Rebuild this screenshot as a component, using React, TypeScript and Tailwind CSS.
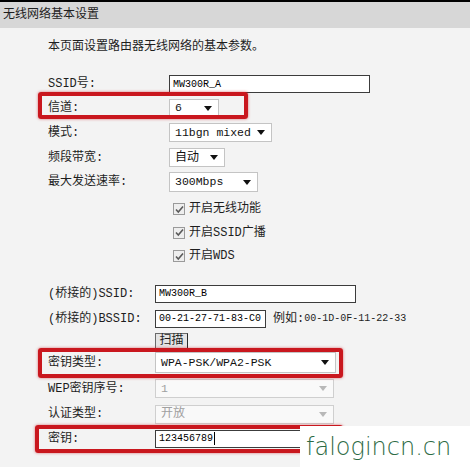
import React from "react";

const Arrow = ({ muted }: { muted?: boolean }) => (
  <svg width="8" height="5" viewBox="0 0 8 5" className="shrink-0">
    <path d="M0 0h8L4 5z" fill={muted ? "#b8b8b8" : "#111"} />
  </svg>
);

const Select = ({
  width,
  value,
  disabled,
  height = 19,
  mono = true,
}: {
  width: number;
  value: string;
  disabled?: boolean;
  height?: number;
  mono?: boolean;
}) => (
  <div
    className={`flex items-center justify-between pl-[5px] pr-[6px] border ${
      disabled ? "bg-[#f9f9f9] border-[#cfcfcf] text-[#a0a0a0]" : "bg-white border-[#c4c4c4] text-[#111]"
    }`}
    style={{ width, height }}
  >
    <span className={mono ? "text-[11.5px]" : "text-[12px]"}>{value}</span>
    <Arrow muted={disabled} />
  </div>
);

const TextInput = ({ width, value, cursor }: { width: number; value: string; cursor?: boolean }) => (
  <div
    className="flex items-center bg-white border border-[#3c3c3c] pl-[3px] text-[10px] text-black"
    style={{ width, height: 18 }}
  >
    {value}
    {cursor && <span className="inline-block w-px h-[13px] bg-black ml-px" />}
  </div>
);

const Check = ({ label }: { label: string }) => (
  <div className="flex items-center">
    <span className="w-[169px]" />
    <span className="ml-[4px] w-[12px] h-[12px] border border-[#9a9a9a] bg-[#eeeeee] flex items-center justify-center">
      <svg width="9" height="9" viewBox="0 0 9 9">
        <path d="M1 4.5l2.3 2.5L8 1.5" stroke="#5a5a5a" strokeWidth="1.6" fill="none" />
      </svg>
    </span>
    <span className="ml-[4px]">{label}</span>
  </div>
);

export default function App() {
  return (
    <div className="relative w-[470px] h-[467px] overflow-hidden bg-[#f3f3f3] text-[12px] text-[#1e1e1e] font-['Liberation_Mono','Noto_Sans_CJK_SC',monospace]">
      <div className="border-t-2 border-black" />
      <div className="h-[26px] bg-[#d7d7d7] pl-[3px] flex items-center">无线网络基本设置</div>

      <div className="pt-[11px] pl-[48px] h-[27px] leading-[16px]">本页面设置路由器无线网络的基本参数。</div>

      <div className="mt-[17px] pl-[48px]">
        <div className="flex items-center h-[24px]">
          <span className="w-[121px]">SSID号:</span>
          <TextInput width={201} value="MW300R_A" />
        </div>
        <div className="flex items-center h-[24px]">
          <span className="w-[121px]">信道:</span>
          <Select width={50} value="6" />
        </div>
        <div className="flex items-center h-[25px]">
          <span className="w-[121px]">模式:</span>
          <Select width={103} value="11bgn mixed" />
        </div>
        <div className="flex items-center h-[25px]">
          <span className="w-[121px]">频段带宽:</span>
          <Select width={56} value="自动" mono={false} />
        </div>
        <div className="flex items-center h-[24px]">
          <span className="w-[121px]">最大发送速率:</span>
          <Select width={89} value="300Mbps" height={20} />
        </div>
      </div>

      <div className="mt-[3px]">
        <div className="h-[24px] flex items-center"><Check label="开启无线功能" /></div>
        <div className="h-[23px] flex items-center"><Check label="开启SSID广播" /></div>
        <div className="h-[24px] flex items-center"><Check label="开启WDS" /></div>
      </div>

      <div className="mt-[13px] pl-[48px]">
        <div className="flex items-center h-[25px]">
          <span className="w-[107px]">(桥接的)SSID:</span>
          <TextInput width={201} value="MW300R_B" />
        </div>
        <div className="flex items-center h-[25px]">
          <span className="w-[107px]">(桥接的)BSSID:</span>
          <TextInput width={111} value="00-21-27-71-83-C0" />
          <span className="ml-[7px]">例如:</span>
          <span className="text-[10px]">00-1D-0F-11-22-33</span>
        </div>
        <div className="flex items-center h-[19px]">
          <span className="w-[107px]" />
          <button className="h-[16px] w-[33px] flex items-center justify-center bg-[#e4e4e4] border border-[#6a6a6a] border-r-[#2a2a2a] border-b-[#2a2a2a] leading-none">
            扫描
          </button>
        </div>
        <div className="flex items-center h-[25px]">
          <span className="w-[107px]">密钥类型:</span>
          <Select width={181} value="WPA-PSK/WPA2-PSK" height={21} />
        </div>
        <div className="flex items-center h-[27px]">
          <span className="w-[107px]">WEP密钥序号:</span>
          <Select width={179} value="1" disabled />
        </div>
        <div className="flex items-center h-[24px]">
          <span className="w-[107px]">认证类型:</span>
          <Select width={179} value="开放" disabled mono={false} />
        </div>
        <div className="flex items-center h-[25px]">
          <span className="w-[107px]">密钥:</span>
          <TextInput width={201} value="123456789" cursor />
        </div>
      </div>

      <div className="absolute left-[38px] top-[92px] w-[210px] h-[27px] border-[4px] border-[#c9171e] rounded-[3px] shadow-[0_0_3px_rgba(200,20,30,0.6)]" />
      <div className="absolute left-[38px] top-[348px] w-[305px] h-[30px] border-[4px] border-[#c9171e] rounded-[3px] shadow-[0_0_3px_rgba(200,20,30,0.6)]" />
      <div className="absolute left-[35px] top-[425px] w-[308px] h-[28px] border-[4px] border-[#c9171e] rounded-[3px] shadow-[0_0_3px_rgba(200,20,30,0.6)]" />

      <div className="absolute left-[300px] top-[426px] right-0 bottom-0 bg-white flex items-center pl-[6px]">
        <span className="text-[24px] font-extralight text-[#2d6a44] font-['DejaVu_Sans',sans-serif] leading-none">
          falogincn.cn
        </span>
      </div>
    </div>
  );
}
